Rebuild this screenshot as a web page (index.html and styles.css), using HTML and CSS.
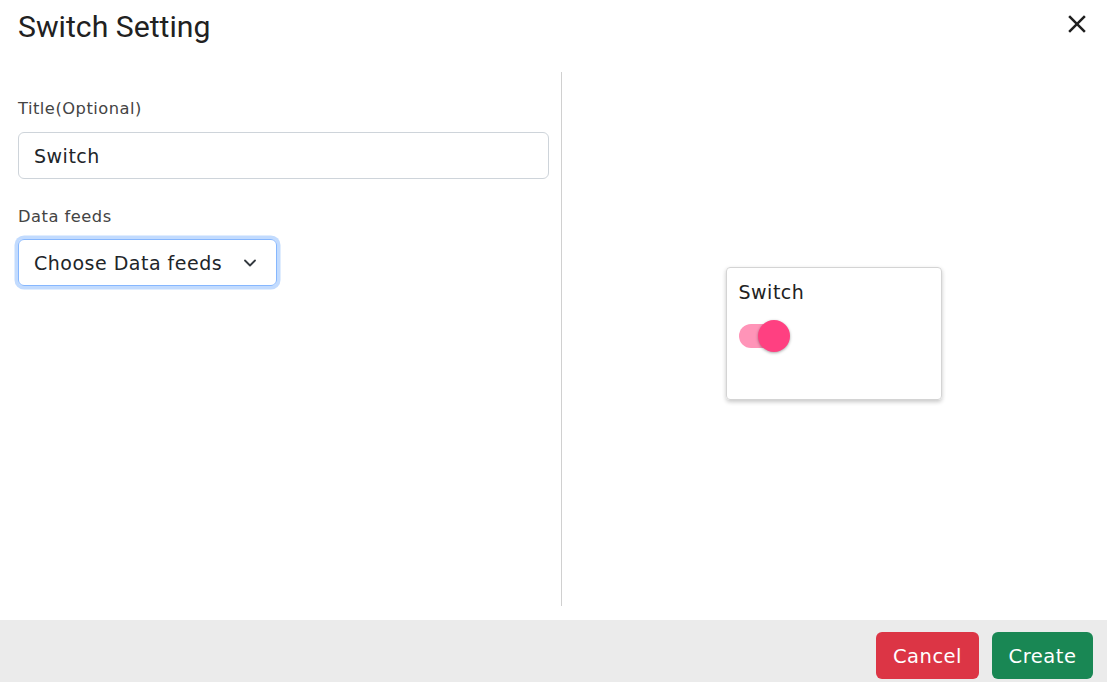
FILE: index.html
```html
<!DOCTYPE html>
<html lang="en">
<head>
<meta charset="utf-8">
<title>Switch Setting</title>
<link rel="stylesheet" href="styles.css">
</head>
<body>
<div class="modal">
  <header class="modal-header">
    <h2 class="modal-title">Switch Setting</h2>
    <button class="close" aria-label="Close">
      <svg viewBox="0 0 24 24" width="30" height="30"><path d="M19 6.41 17.59 5 12 10.59 6.41 5 5 6.41 10.59 12 5 17.59 6.41 19 12 13.41 17.59 19 19 17.59 13.41 12z" fill="#1f1f1f"/></svg>
    </button>
  </header>
  <main class="modal-body">
    <section class="form-col">
      <label class="label">Title(Optional)</label>
      <div class="input">Switch</div>
      <label class="label label-2">Data feeds</label>
      <div class="select">
        <span>Choose Data feeds</span>
        <svg class="chev" viewBox="0 0 16 16" width="16" height="16"><path d="M3 5.5l5 5 5-5" fill="none" stroke="#343a40" stroke-width="1.8" stroke-linecap="round" stroke-linejoin="round"/></svg>
      </div>
    </section>
    <section class="preview-col">
      <div class="card">
        <div class="card-title">Switch</div>
        <div class="switch">
          <span class="track"></span>
          <span class="thumb"></span>
        </div>
      </div>
    </section>
  </main>
  <footer class="modal-footer">
    <button class="btn btn-cancel">Cancel</button>
    <button class="btn btn-create">Create</button>
  </footer>
</div>
</body>
</html>
```
FILE: styles.css
```css
* { box-sizing: border-box; }
html, body { margin: 0; padding: 0; background: #fff; }
body {
  width: 1107px; height: 682px; overflow: hidden;
  font-family: "DejaVu Sans", "Open Sans", sans-serif;
  letter-spacing: 0.5px;
  color: #212529;
}

.modal { display: flex; flex-direction: column; height: 682px; }

.modal-header {
  height: 56px;
  display: flex;
  align-items: flex-start;
  justify-content: space-between;
  padding: 0 15px 0 18px;
}
.modal-title {
  margin: 0;
  padding-top: 7px;
  font-family: Roboto, "Liberation Sans", sans-serif;
  font-weight: 400;
  font-size: 30.2px;
  line-height: 40px;
  letter-spacing: 0;
  color: #212121;
}
.close {
  margin-top: 9px;
  width: 30px; height: 30px;
  padding: 0; border: 0; background: none;
  display: flex;
}

.modal-body {
  flex: 1;
  display: flex;
  padding-top: 16px;
  padding-bottom: 14px;
}
.form-col {
  width: 562px;
  border-right: 1px solid #d0d0d0;
  padding: 25px 12px 0 18px;
  display: flex;
  flex-direction: column;
  align-items: flex-start;
}
.label {
  font-size: 16.3px;
  line-height: 24px;
  color: #444;
  margin-bottom: 11px;
}
.label-2 { margin-top: 2px; margin-bottom: 10px; }
.input {
  width: 100%;
  height: 47px;
  border: 1px solid #ced4da;
  border-radius: 6px;
  padding: 0 15px;
  display: flex;
  align-items: center;
  font-size: 19px;
  color: #212529;
  margin-bottom: 24px;
}
.select {
  width: 259px;
  height: 47px;
  border: 1px solid #86b7fe;
  border-radius: 6px;
  box-shadow: 0 0 0 3.5px rgba(13, 110, 253, 0.25);
  padding: 0 18px 0 15px;
  display: flex;
  align-items: center;
  justify-content: space-between;
  font-size: 19px;
  color: #212529;
}
.chev { margin-top: 1px; }

.preview-col {
  flex: 1;
  display: flex;
  align-items: center;
  justify-content: center;
  padding: 0 2px 12px 0;
}
.card {
  width: 216px;
  height: 133px;
  border: 1px solid #d4d4d4;
  border-radius: 4px;
  box-shadow: 0 2px 4px rgba(0, 0, 0, 0.22);
  padding: 10px 12px;
}
.card-title {
  font-size: 19px;
  line-height: 28px;
  color: #222;
}
.switch {
  position: relative;
  width: 53px;
  height: 32px;
  margin-top: 14px;
}
.track {
  position: absolute;
  left: 0; top: 4px;
  width: 50px; height: 24px;
  border-radius: 12px;
  background: #ff94b8;
}
.thumb {
  position: absolute;
  left: 19px; top: 0;
  width: 32px; height: 32px;
  border-radius: 50%;
  background: #ff4081;
  box-shadow: 0 1px 3px rgba(0,0,0,0.35);
}

.modal-footer {
  height: 62px;
  background: #ebebeb;
  display: flex;
  justify-content: flex-end;
  align-items: flex-start;
  gap: 13px;
  padding: 12px 14px 0 0;
}
.btn {
  height: 47px;
  border: 0;
  border-radius: 6px;
  color: #fff;
  font-family: "DejaVu Sans", "Open Sans", sans-serif;
  letter-spacing: 0.5px;
  font-size: 19.5px;
  padding: 2px 0 0;
}
.btn-cancel { width: 103px; background: #dc3545; }
.btn-create { width: 101px; background: #198754; }
```
